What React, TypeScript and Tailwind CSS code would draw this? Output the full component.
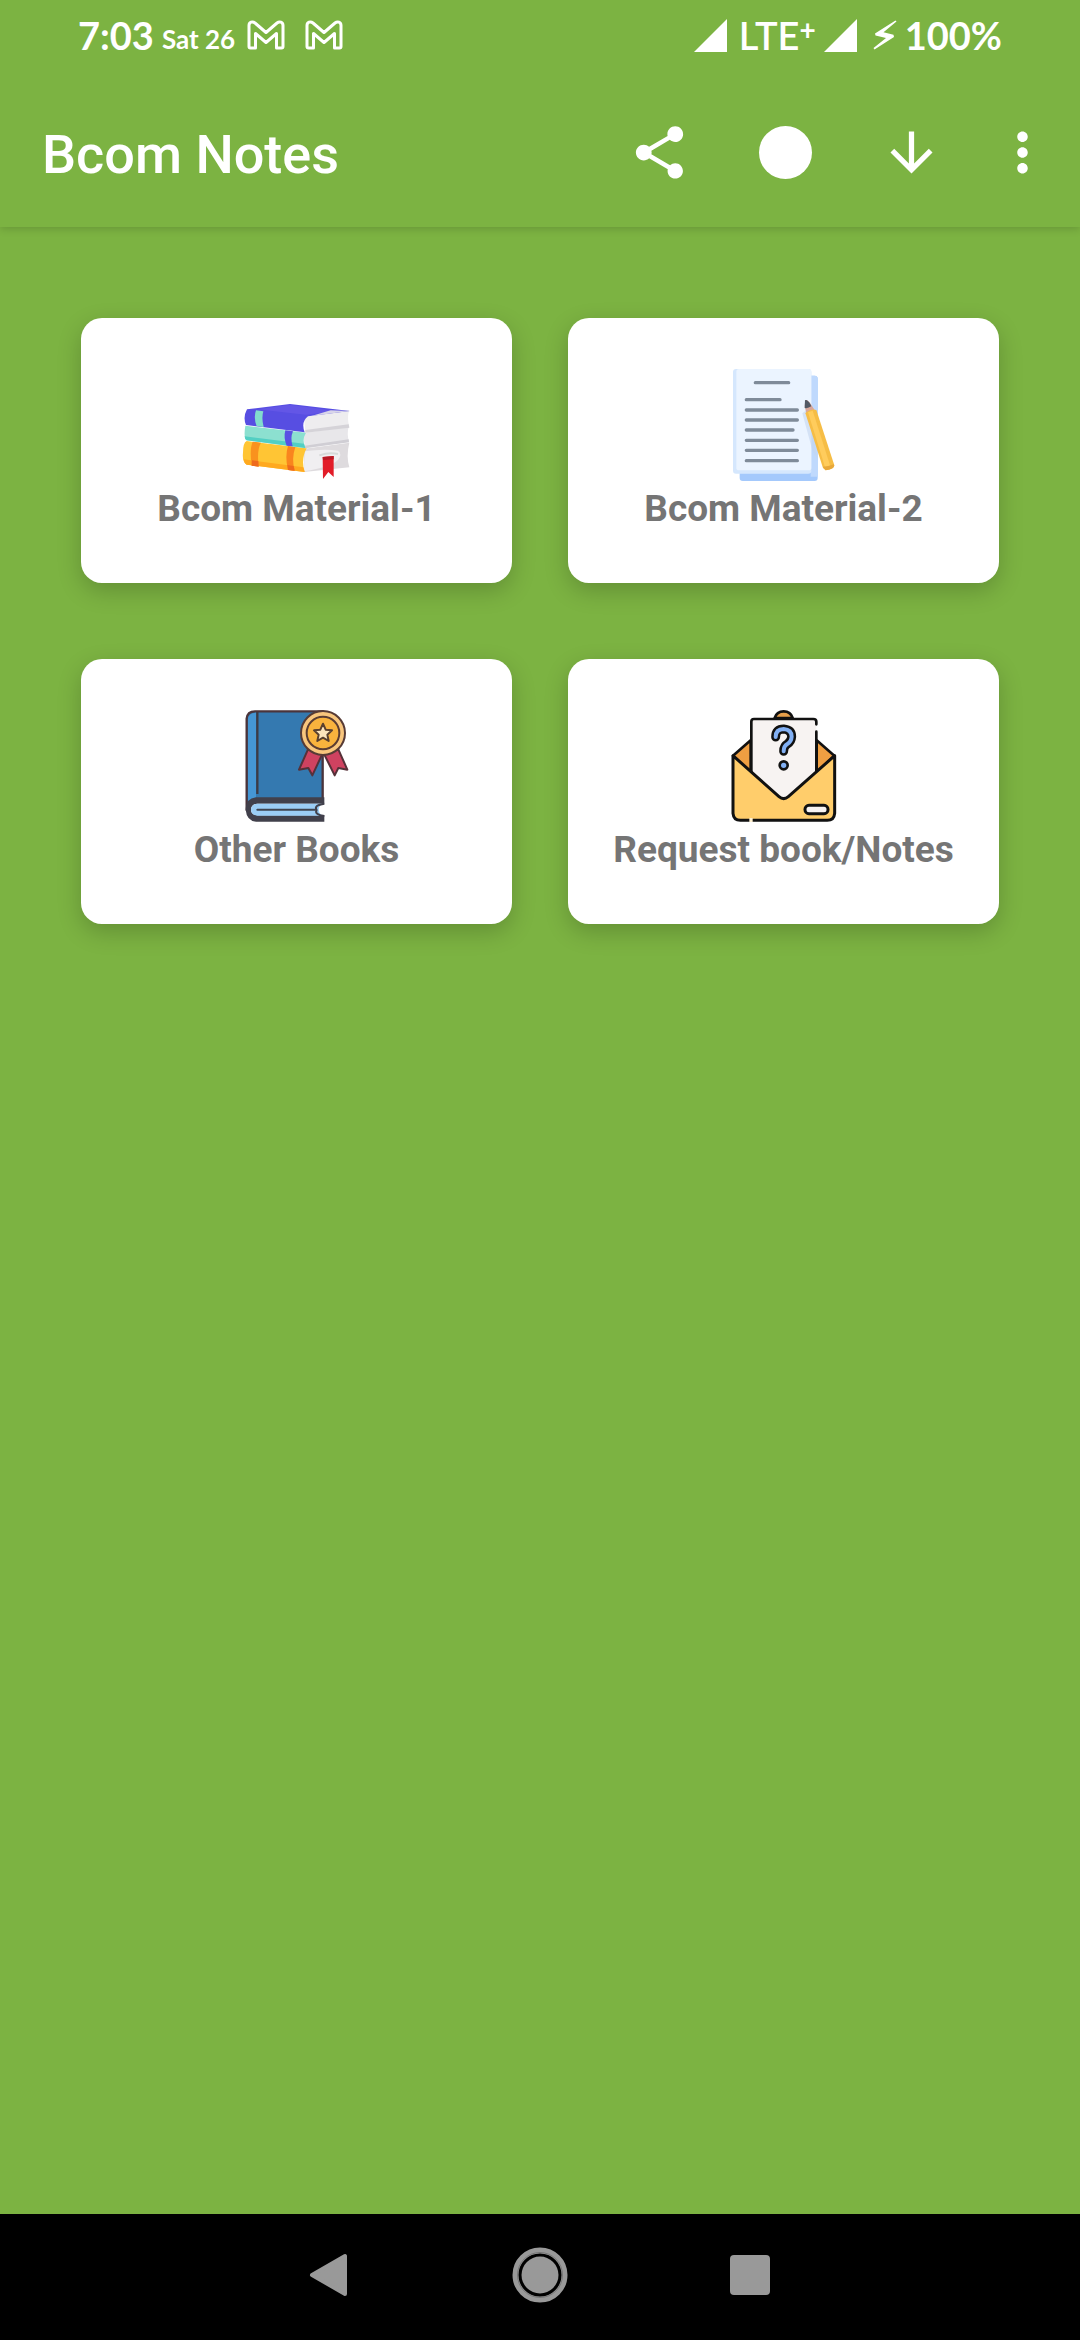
// src/App.tsx
import React from 'react';
import { MdArrowDownward, MdMoreVert, MdShare } from 'react-icons/md';

const GmailIcon = () => (
  <svg viewBox="0 0 38 30" className="w-[38px] h-[30px]" fill="none" stroke="white" strokeWidth="3" strokeLinejoin="round" aria-hidden="true">
    <path d="M2 5.500C2 2 5.500 1 8 3L19 12.500L30 3C32.500 1 36 2 36 5.500V26.500Q36 28 34.500 28H29.500V13.500L19 22.500L8.500 13.500V28H3.500Q2 28 2 26.500Z" />
  </svg>
);

const SignalIcon = () => (
  <svg viewBox="0 0 33 33" className="w-[33px] h-[33px]" fill="white" aria-hidden="true">
    <path d="M33 0V33H0Z" />
  </svg>
);

const BoltIcon = () => (
  <svg viewBox="0 0 24 30" className="w-6 h-[30px]" fill="white" aria-hidden="true">
    <path d="M22.500 0.500L2 13.500L2.500 15.500L13 18L0.500 28L1.500 29.500L21 17L20.500 14.800L10.500 12.300L23.500 1.500Z" />
  </svg>
);

const BooksIcon = () => (
  <svg viewBox="61 -33 336 336" className="w-28 h-28" aria-hidden="true">
    {/* Bottom book */}
    <path d="M250 206L386 188Q376 228 386 262L250 276Z" fill="#dedbde" />
    <path d="M252 214Q310 205 352 212Q366 222 352 240Q330 262 250 274Z" fill="#f0eff1" />
    <path d="M296 226Q325 216 352 222" stroke="#d6dad9" strokeWidth="6" fill="none" />
    <path d="M78 183L258 205Q240 238 252 276L78 254Q64 246 67 218Q67 188 78 183Z" fill="#ffc534" />
    <path d="M69 238L248 262L252 276L78 254Q70 250 69 238Z" fill="#ffa91f" />
    <path d="M96 185L121 188Q108 210 114 260L93 257Q86 208 96 185Z" fill="#f9921e" />
    <path d="M202 198L224 201Q212 236 222 272L202 270Q192 230 202 198Z" fill="#f9851e" />
    <path d="M94 241L113 243L114 260L93 257ZM200 255L219 258L222 272L202 270Z" fill="#ee6a1c" />
    {/* Middle book */}
    <path d="M248 158L384 140Q378 160 385 186L252 205Z" fill="#e8e7ea" />
    <path d="M252 197L384 178L385 187L252 205Z" fill="#d0ced4" />
    <path d="M74 137L256 158Q243 178 254 204L78 181Q68 174 74 137Z" fill="#8ce0d0" />
    <path d="M72 169L250 191L254 204L78 181Q72 178 72 169Z" fill="#52cfc3" />
    <path d="M194 151L217 154Q208 174 216 199L198 197Q188 173 194 151Z" fill="#5a50e3" />
    {/* Top book */}
    <path d="M250 107L386 90Q378 112 386 142L254 158Z" fill="#eeedef" />
    <path d="M254 150L384 133L386 143L254 158Z" fill="#d5d3d8" />
    <path d="M79 88L208 72L387 93L262 109Q240 126 252 157L76 135Q66 112 79 88Z" fill="#574ee2" />
    <path d="M110 88L208 75L350 93L255 104Z" fill="#6b5ce9" opacity="0.6" />
    <path d="M330 91L387 93L272 108Z" fill="#d8d5e9" />
    <path d="M106 91L128 94Q122 114 129 141L108 139Q98 112 106 91Z" fill="#82dccd" />
    {/* Bookmark */}
    <path d="M306 231L339 228V291L323 276L307 297Z" fill="#e21c28" />
    <path d="M306 231L339 228V238L307 240Z" fill="#b71924" />
  </svg>
);

const NotesIcon = () => (
  <svg viewBox="52 57 336 336" className="w-28 h-28" aria-hidden="true">
    <rect x="87" y="77" width="234" height="316" rx="9" fill="#a4c9fc" />
    <path d="M300 77H312Q321 77 321 86V380H300Z" fill="#bfd9fd" />
    <rect x="67" y="57" width="235" height="314" rx="9" fill="#d5e7fd" />
    <rect x="77" y="57" width="225" height="304" rx="8" fill="#ebf4ff" />
    <g stroke="#7f8b99" strokeWidth="10" strokeLinecap="round">
      <path d="M134 98H234M107 149H208M107 180H260M107 210H260M107 240H247M107 271H260M107 301H260M107 332H260" />
    </g>
    <path d="M275 190L288 180L322 330L305 300Z" fill="#c4d6ef" opacity="0.6" />
    <path d="M284 150Q292 148 302 165L312 180L287 190L282 168Z" fill="#d9a79a" />
    <path d="M283 151Q290 147 300 164L302 169Q292 176 282 174Z" fill="#515965" />
    <path d="M284 189Q300 174 317 180L371 346Q371 358 345 361L337 354Z" fill="#f6bd45" />
    <path d="M292 187L306 182L360 352L345 358Z" fill="#ffcc5c" />
    <path d="M336 350Q352 350 370 343Q373 358 345 361Z" fill="#e8a83a" />
  </svg>
);

const AwardBookIcon = () => (
  <svg viewBox="61 60 336 336" className="w-28 h-28" strokeLinejoin="round" aria-hidden="true">
    <path d="M78 360V86Q80 64 103 64H306V330H100Q82 334 78 360Z" fill="#3479b0" stroke="#4b343b" strokeWidth="7" />
    <path d="M82 338V88Q84 68 106 68V325Q90 327 82 338Z" fill="#4596d4" />
    <path d="M110 66V312" stroke="#3d3a44" strokeWidth="7" />
    {/* Cover edge and pages */}
    <path d="M311 322H106Q75 325 75 359Q78 392 106 395H311V376H110Q91 374 91 359Q92 342 110 341H311Z" fill="#41404b" />
    <path d="M110 341H304Q284 359 304 377H110Q91 374 91 359Q92 342 110 341Z" fill="#9bcdf5" />
    <path d="M110 359H284" stroke="#3f4450" strokeWidth="6" strokeLinecap="round" />
    <path d="M311 341Q278 346 288 360Q280 374 311 378" fill="none" stroke="#41404b" strokeWidth="6" />
    {/* Medal */}
    <path d="M262 178L235 239L263 234L275 256L304 194Z" fill="#cf4260" stroke="#563139" strokeWidth="6" />
    <path d="M353 178L380 239L353 234L342 256L311 194Z" fill="#cf4260" stroke="#563139" strokeWidth="6" />
    <circle cx="307" cy="129" r="66" fill="#f8c67d" stroke="#573b35" strokeWidth="6" />
    <circle cx="307" cy="129" r="49" fill="#f9b33d" stroke="#5b3d32" strokeWidth="6" />
    <path d="M307 101L315 119L334 121L320 134L324 153L307 143L290 153L294 134L280 121L299 119Z" fill="#fce5bd" stroke="#59402f" strokeWidth="6" />
  </svg>
);

const RequestIcon = () => (
  <svg viewBox="52 60 336 336" className="w-28 h-28" strokeLinejoin="round" strokeLinecap="round" aria-hidden="true">
    {/* Envelope back and flap */}
    <path d="M67 197L120 151V250ZM371 197L318 151V250Z" fill="#ef9f42" stroke="#111" strokeWidth="8" />
    <path d="M192 84Q198 64 219 64Q240 64 246 84Z" fill="#e8a04a" stroke="#111" strokeWidth="8" />
    {/* Letter */}
    <path d="M122 95Q122 87 130 87H308Q317 87 317 95V290L219 350L122 290Z" fill="#f7f3f2" />
    <path d="M122 250V95Q122 87 130 87H308Q317 87 317 95V103M317 125V250" fill="none" stroke="#111" strokeWidth="8" />
    {/* Envelope front */}
    <path d="M67 197L205 320Q219 332 233 320L372 197V370Q370 391 350 391H89Q69 391 67 370Z" fill="#ffcd6b" stroke="#111" strokeWidth="9" />
    <path d="M121 384V400" stroke="#fff0cf" strokeWidth="10" strokeLinecap="butt" />
    <rect x="283" y="346" width="69" height="25" rx="12" fill="#f7f3f2" stroke="#111" strokeWidth="9" />
    <path d="M195 141Q195 117 219 117Q243 119 243 140Q242 155 230 162Q219 168 219 184" fill="none" stroke="#111" strokeWidth="27" />
    <path d="M195 141Q195 117 219 117Q243 119 243 140Q242 155 230 162Q219 168 219 184" fill="none" stroke="#82b0f4" strokeWidth="12" />
    <circle cx="219" cy="226" r="12" fill="#82b0f4" stroke="#111" strokeWidth="8" />
  </svg>
);

const menuItems = [
  { label: 'Bcom Material-1', Icon: BooksIcon },
  { label: 'Bcom Material-2', Icon: NotesIcon },
  { label: 'Other Books', Icon: AwardBookIcon },
  { label: 'Request book/Notes', Icon: RequestIcon }
];

const StatusBar: React.FC = () => (
  <div className="h-[70px] px-[78px] flex items-center justify-between font-['Lato',sans-serif] font-bold text-[38px] leading-10">
    <div className="flex items-center">
      <span>7:03</span>
      <span className="ml-2 pt-2 text-[26px] leading-8">Sat 26</span>
      <span className="ml-3 flex gap-5">
        <GmailIcon />
        <GmailIcon />
      </span>
    </div>
    <div className="flex items-center">
      <SignalIcon />
      <span className="ml-3 font-semibold">LTE</span>
      <span className="pb-3 text-[28px] leading-7">+</span>
      <span className="ml-2">
        <SignalIcon />
      </span>
      <span className="ml-4">
        <BoltIcon />
      </span>
      <span className="ml-2">100%</span>
    </div>
  </div>
);

const App: React.FC = () => {
  return (
    <div className="min-h-screen flex flex-col bg-[#7cb342] font-['Roboto',sans-serif]">
      <header className="text-white shadow-[0_2px_8px_rgba(0,0,0,0.16)]">
        <StatusBar />
        <div className="h-[157px] pt-2 pl-[42px] pr-2.5 flex items-center">
          <h1 className="flex-1 pt-1 text-[54px] leading-16 font-medium">Bcom Notes</h1>
          <button type="button" aria-label="Share" className="w-[126px] h-[126px] flex items-center justify-center">
            <MdShare size={63} />
          </button>
          <button type="button" aria-label="Record" className="w-[126px] h-[126px] flex items-center justify-center">
            <span className="w-[53px] h-[53px] rounded-full bg-white" />
          </button>
          <button type="button" aria-label="Download" className="w-[126px] h-[126px] flex items-center justify-center">
            <MdArrowDownward size={63} />
          </button>
          <button type="button" aria-label="More options" className="w-24 h-[126px] flex items-center justify-center">
            <MdMoreVert size={63} />
          </button>
        </div>
      </header>

      <main className="flex-1 px-[81px] pt-[91px] pb-20">
        <div className="grid grid-cols-2 gap-x-14 gap-y-[76px]">
          {menuItems.map(({ label, Icon }) => (
            <button
              key={label}
              type="button"
              className="flex flex-col items-center gap-[5px] pt-[51px] pb-13 bg-white rounded-[21px] shadow-[0_8px_24px_rgba(0,0,0,0.2)]"
            >
              <Icon />
              <span className="text-[37px] leading-[45px] font-bold text-[#757575]">{label}</span>
            </button>
          ))}
        </div>
      </main>

      {/* System navigation */}
      <nav className="h-[126px] pb-1 flex items-center justify-center bg-black">
        <button type="button" aria-label="Back" className="w-[210px] h-full flex items-center justify-center">
          <svg viewBox="0 0 44 44" className="w-11 h-11" fill="#999" stroke="#999" strokeWidth="4" strokeLinejoin="round">
            <path d="M37 3V41L4 22Z" />
          </svg>
        </button>
        <button type="button" aria-label="Home" className="w-[210px] h-full flex items-center justify-center">
          <svg viewBox="0 0 56 56" className="w-14 h-14">
            <circle cx="28" cy="28" r="24.500" fill="none" stroke="#999" strokeWidth="6" />
            <circle cx="28" cy="28" r="22.500" fill="none" stroke="#777" strokeWidth="1" />
            <circle cx="28" cy="28" r="18.500" fill="#999" />
          </svg>
        </button>
        <button type="button" aria-label="Recent apps" className="w-[210px] h-full flex items-center justify-center">
          <span className="w-10 h-10 rounded-[4px] bg-[#999]" />
        </button>
      </nav>
    </div>
  );
};

export default App;
